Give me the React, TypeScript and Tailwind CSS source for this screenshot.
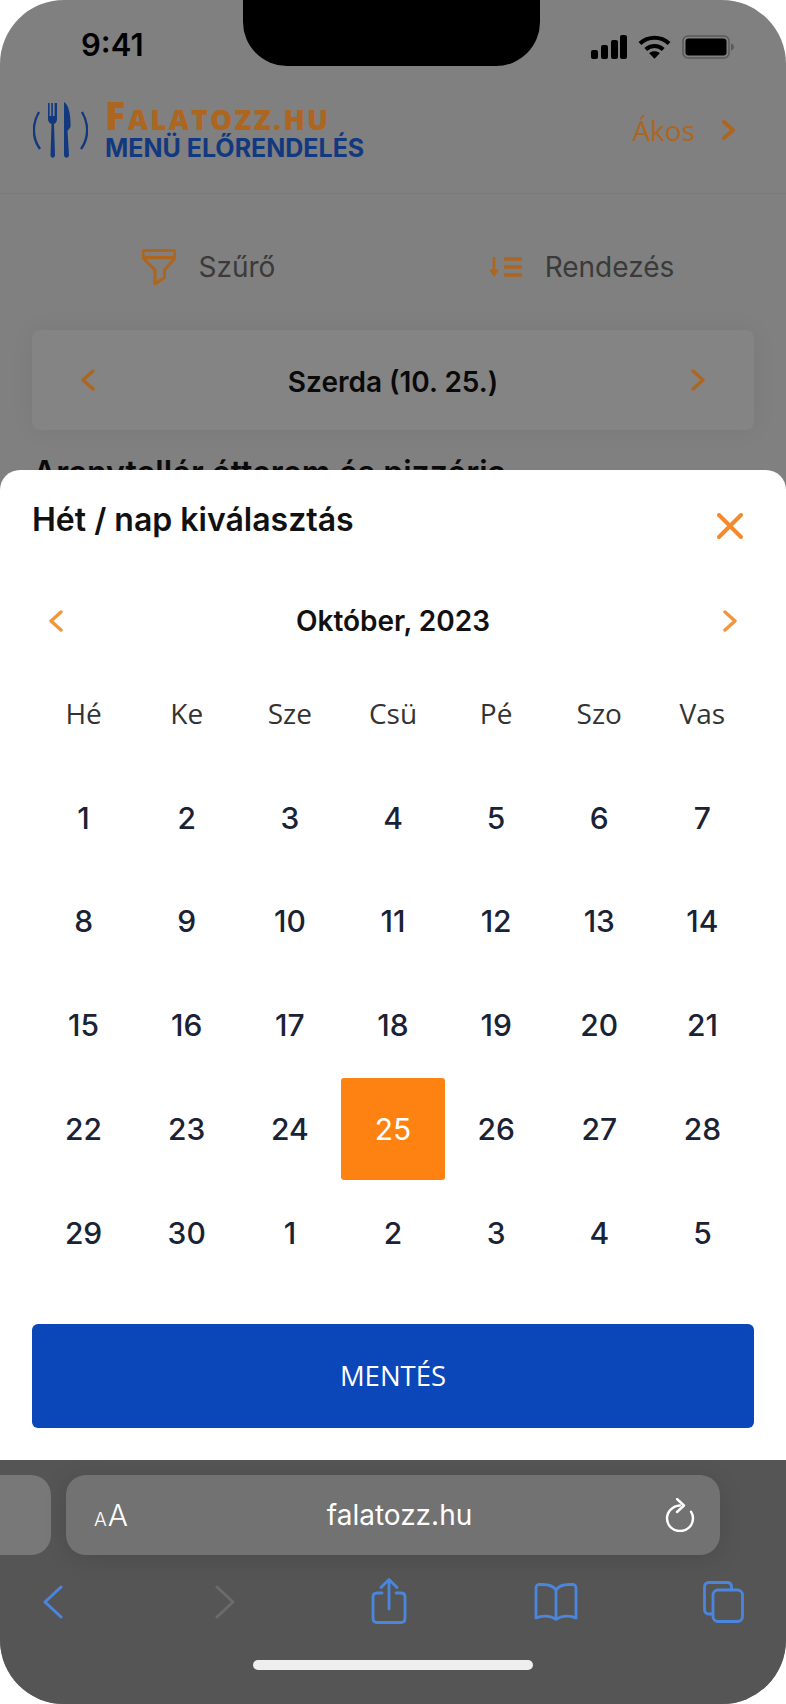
const WEEKDAYS = ["Hé", "Ke", "Sze", "Csü", "Pé", "Szo", "Vas"];
const DAYS = [
  1, 2, 3, 4, 5, 6, 7, 8, 9, 10, 11, 12, 13, 14, 15, 16, 17, 18, 19, 20, 21, 22, 23, 24, 25, 26,
  27, 28, 29, 30, 1, 2, 3, 4, 5,
];

function Chevron({ dir, color, width = 14, height = 22, stroke = 3.4 }: { dir: "left" | "right"; color: string; width?: number; height?: number; stroke?: number }) {
  const d = dir === "left" ? `M${width - 2} 2L2 ${height / 2}l${width - 4} ${height / 2 - 2}` : `M2 2l${width - 4} ${height / 2 - 2}L2 ${height - 2}`;
  return (
    <svg width={width} height={height} viewBox={`0 0 ${width} ${height}`} fill="none" stroke={color} strokeWidth={stroke} strokeLinecap="round" strokeLinejoin="round">
      <path d={d} />
    </svg>
  );
}

function StatusIcons() {
  return (
    <div className="flex items-center gap-[11px]">
      <svg width="36" height="24" viewBox="0 0 36 24" fill="#000">
        <rect x="0" y="15" width="7" height="9" rx="2" />
        <rect x="10" y="10" width="7" height="14" rx="2" />
        <rect x="20" y="5" width="7" height="19" rx="2" />
        <rect x="29" y="0" width="7" height="24" rx="2" />
      </svg>
      <svg width="33" height="24" viewBox="0 0 34 24" fill="none" stroke="#000" strokeWidth="4.2">
        <path d="M2 8.500c8.500-8 21.500-8 30 0" />
        <path d="M8 14.500c5-4.600 13-4.600 18 0" />
        <path d="M17 24l-5.500-5.600c3-2.600 8-2.600 11 0z" fill="#000" stroke="none" />
      </svg>
      <svg width="52" height="24" viewBox="0 0 52 24" fill="none">
        <rect x="1" y="1" width="46" height="22" rx="5" stroke="#5a5a5a" strokeWidth="1.600" />
        <rect x="3.500" y="3.500" width="41" height="17" rx="3" fill="#000" />
        <path d="M49 8.500c2 .6 3 2 3 3.500s-1 2.900-3 3.500z" fill="#5a5a5a" />
      </svg>
    </div>
  );
}

function Logo() {
  return (
    <div className="flex items-center gap-[17px]">
      <svg width="55" height="56" viewBox="0 0 55 56" fill="none">
        <path d="M6 10C-1 22 -1 36 7 47" stroke="#12397f" strokeWidth="2.400" />
        <path d="M49 10c7 12 7 26-1 37" stroke="#12397f" strokeWidth="2.400" />
        <path
          d="M15 1h1.600v13h1.700V1h1.600v13h1.700V1H24v16c0 3-1.700 4.400-3 5l1 31c0 3.500-4.500 3.500-4.500 0l1-31c-1.300-.6-3.500-2-3.500-5z"
          fill="#12397f"
        />
        <path d="M31 0c4 2 7 11 6.500 25l-3 4 1.500 24c0 3.500-5 3.500-5 0z" fill="#12397f" />
      </svg>
      <div>
        <div className="flex items-baseline h-[32px] text-[#ad6620] font-['Open_Sans',sans-serif] font-extrabold tracking-[2.200px] whitespace-nowrap">
          <span className="text-[38px] leading-[32px]">F</span>
          <span className="text-[28px] leading-[32px]">ALATOZZ.HU</span>
        </div>
        <div className="mt-[5px] text-[#12397f] font-['Inter',sans-serif] text-[25px] font-bold leading-[24px] whitespace-nowrap">
          MENÜ ELŐRENDELÉS
        </div>
      </div>
    </div>
  );
}

function FunnelIcon() {
  return (
    <svg width="34" height="36" viewBox="0 0 34 36" fill="none" stroke="#ad6620" strokeWidth="3.200">
      <path d="M3 1.500h28c1.500 0 2 .8 2 2v4c0 1-.3 1.500-1 2.500l-9.500 11v7.500L13 35V21L2 10c-.7-.8-1-1.500-1-2.500v-4c0-1.200.5-2 2-2z" />
      <path d="M2 8.500h30" />
    </svg>
  );
}

function SortIcon() {
  return (
    <svg width="33" height="20" viewBox="0 0 33 20" fill="none" stroke="#ad6620">
      <path d="M5 0v17" strokeWidth="2.600" />
      <path d="M0 12.500L5 20l5-7.500z" fill="#ad6620" stroke="none" />
      <path d="M15 2h18M15 10h18M15 18h18" strokeWidth="3.400" />
    </svg>
  );
}

function BackgroundPage() {
  return (
    <div className="h-[470px] overflow-hidden font-['Inter',sans-serif]">
      <div className="h-[66px] pl-[81px] pr-[52px] pt-[29px] flex justify-between items-start">
        <span className="text-[31px] leading-[32px] font-semibold text-black">9:41</span>
        <div className="pt-[6px]">
          <StatusIcons />
        </div>
      </div>
      <div className="h-[128px] pl-[33px] pr-[51px] flex items-center justify-between border-b border-[#7a7a7a]">
        <Logo />
        <div className="flex items-center gap-[27px] pt-[1px]">
          <span className="font-['Open_Sans',sans-serif] text-[28px] text-[#ad6620]">Ákos</span>
          <Chevron dir="right" color="#ad6620" width={13} height={20} stroke={4} />
        </div>
      </div>
      <div className="h-[136px] flex items-center pt-[10px]">
        <div className="w-[393px] flex justify-center items-center gap-[23px] pr-[6px] pl-[30px]">
          <FunnelIcon />
          <span className="text-[28px] text-[#3a3a3a]">Szűrő</span>
        </div>
        <div className="w-[393px] flex justify-center items-center gap-[23px] pr-[16px]">
          <SortIcon />
          <span className="text-[28px] text-[#3a3a3a]">Rendezés</span>
        </div>
      </div>
      <div className="mx-[32px] h-[100px] rounded-[8px] bg-[#848484] shadow-[0_0_24px_rgba(0,0,0,0.06)] flex items-center justify-between px-[49px]">
        <Chevron dir="left" color="#ad6620" />
        <span className="text-[28px] font-semibold text-[#0a0a0a] pt-[3px]">Szerda (10. 25.)</span>
        <Chevron dir="right" color="#ad6620" />
      </div>
      <div className="pl-[33px] pt-[25px] text-[32px] leading-[36px] font-semibold text-[#0a0a0a] whitespace-nowrap">
        Aranytallér étterem és pizzéria
      </div>
    </div>
  );
}

function CalendarSheet() {
  return (
    <div className="h-[990px] bg-white rounded-t-[20px] px-[32px] font-['Inter',sans-serif]">
      <div className="h-[111px] pt-[30px] flex justify-between items-start">
        <h2 className="text-[32px] leading-[40px] font-semibold text-[#111]">Hét / nap kiválasztás</h2>
        <svg width="26" height="26" viewBox="0 0 26 26" className="mt-[13px] mr-[11px]" stroke="#f58a2a" strokeWidth="4" strokeLinecap="round">
          <path d="M2 2l22 22M24 2L2 24" />
        </svg>
      </div>
      <div className="h-[80px] flex items-center justify-between px-[17px]">
        <Chevron dir="left" color="#f0963c" />
        <span className="text-[28px] font-semibold text-[#111]">Október, 2023</span>
        <Chevron dir="right" color="#f0963c" />
      </div>
      <div className="grid grid-cols-7 auto-rows-[103.800px] mt-[2px]">
        {WEEKDAYS.map((d) => (
          <div key={d} className="flex items-center justify-center pb-[4px] text-[28px] text-[#333] font-['Open_Sans',sans-serif]">
            {d}
          </div>
        ))}
        {DAYS.map((d, i) => (
          <div
            key={i}
            className={
              i === 24
                ? "flex items-center justify-center mb-[2px] text-[30px] text-white bg-[#fd8212] rounded-[3px] font-normal"
                : "flex items-center justify-center pb-[1px] text-[30px] text-[#1a2235] font-[450]"
            }
          >
            {d}
          </div>
        ))}
      </div>
      <button className="mt-[38px] w-full h-[104px] rounded-[6px] bg-[#0b47b9] text-white text-[27.500px] font-medium font-['Open_Sans',sans-serif]">
        MENTÉS
      </button>
    </div>
  );
}

function SafariBar() {
  return (
    <div className="h-[244px] bg-[#555] pt-[15px]">
      <div className="flex gap-[15px] h-[80px]">
        <div className="w-[51px] bg-[#787878] rounded-r-[20px]" />
        <div className="w-[654px] bg-[#727272] rounded-[20px] shadow-[0_4px_24px_rgba(0,0,0,0.12)] flex items-center justify-between pl-[28px] pr-[25px]">
          <div className="text-white font-['Inter',sans-serif] font-light flex items-baseline gap-[1px]">
            <span className="text-[19px]">A</span>
            <span className="text-[30px]">A</span>
          </div>
          <span className="text-[28px] text-white font-['Inter',sans-serif] font-normal ml-[6px]">falatozz.hu</span>
          <svg width="30" height="34" viewBox="0 0 30 34" fill="none" stroke="#fff" strokeWidth="2.400" strokeLinecap="round" strokeLinejoin="round">
            <path d="M15 7.500C7.500 8 2 13.500 2 20.500 2 27.500 7.800 33 15 33s13-5.500 13-12.500c0-2.500-.7-4.800-2-6.800" />
            <path d="M12 1l7 6.500-7 6.500" />
          </svg>
        </div>
      </div>
      <div className="h-[84px] pl-[43px] pr-[42px] pt-[23px] flex justify-between items-start">
        <svg width="20" height="34" viewBox="0 0 20 34" fill="none" stroke="#4a86de" strokeWidth="3" strokeLinecap="round" strokeLinejoin="round" className="mt-[7px]">
          <path d="M18 2L2 17l16 15" />
        </svg>
        <svg width="20" height="34" viewBox="0 0 20 34" fill="none" stroke="#6b6b6b" strokeWidth="3" strokeLinecap="round" strokeLinejoin="round" className="mt-[7px] ml-[151px]">
          <path d="M2 2l16 15L2 32" />
        </svg>
        <svg width="36" height="46" viewBox="0 0 36 46" fill="none" stroke="#4a86de" strokeWidth="2.800" strokeLinecap="round" strokeLinejoin="round" className="ml-[136px]">
          <path d="M11 15H6c-3 0-4 1.500-4 4v21c0 3 1.500 4.500 4 4.500h24c3 0 4-1.500 4-4.500V19c0-2.500-1-4-4-4h-5" />
          <path d="M18 31V2M10 9.500L18 1.500l8 8" />
        </svg>
        <svg width="44" height="38" viewBox="0 0 44 38" fill="none" stroke="#4a86de" strokeWidth="2.800" strokeLinejoin="round" className="ml-[126px] mt-[5px]">
          <path d="M22 7C19 2.500 14 1.500 9 1.500H5C3 1.500 2 3 2 5v30c5-2.500 14-3 20 1.500 6-4.500 15-4 20-1.500V5c0-2-1-3.500-3-3.500h-4C30 1.500 25 2.500 22 7z" />
          <path d="M22 7v29" />
        </svg>
        <svg width="41" height="42" viewBox="0 0 41 42" fill="none" stroke="#4a86de" strokeWidth="2.800" className="ml-[125px] mt-[3px]">
          <path d="M9 33H6c-3 0-4.500-1.500-4.500-4.500V6C1.500 3 3 1.500 6 1.500h18c3 0 4.500 1.500 4.500 4.500v3" />
          <rect x="10" y="9" width="29.500" height="31.500" rx="5" />
        </svg>
      </div>
      <div className="w-[280px] h-[10px] rounded-full bg-[#eee] mx-auto mt-[21px]" />
    </div>
  );
}

export default function App() {
  return (
    <div className="w-[786px] h-[1704px] bg-white">
      <div className="relative w-full h-full rounded-[64px] overflow-hidden bg-[#808080]">
        <BackgroundPage />
        <CalendarSheet />
        <SafariBar />
        {/* iPhone notch */}
        <div className="absolute top-0 left-[243px] w-[297px] h-[66px] bg-black rounded-b-[44px]" />
      </div>
    </div>
  );
}
